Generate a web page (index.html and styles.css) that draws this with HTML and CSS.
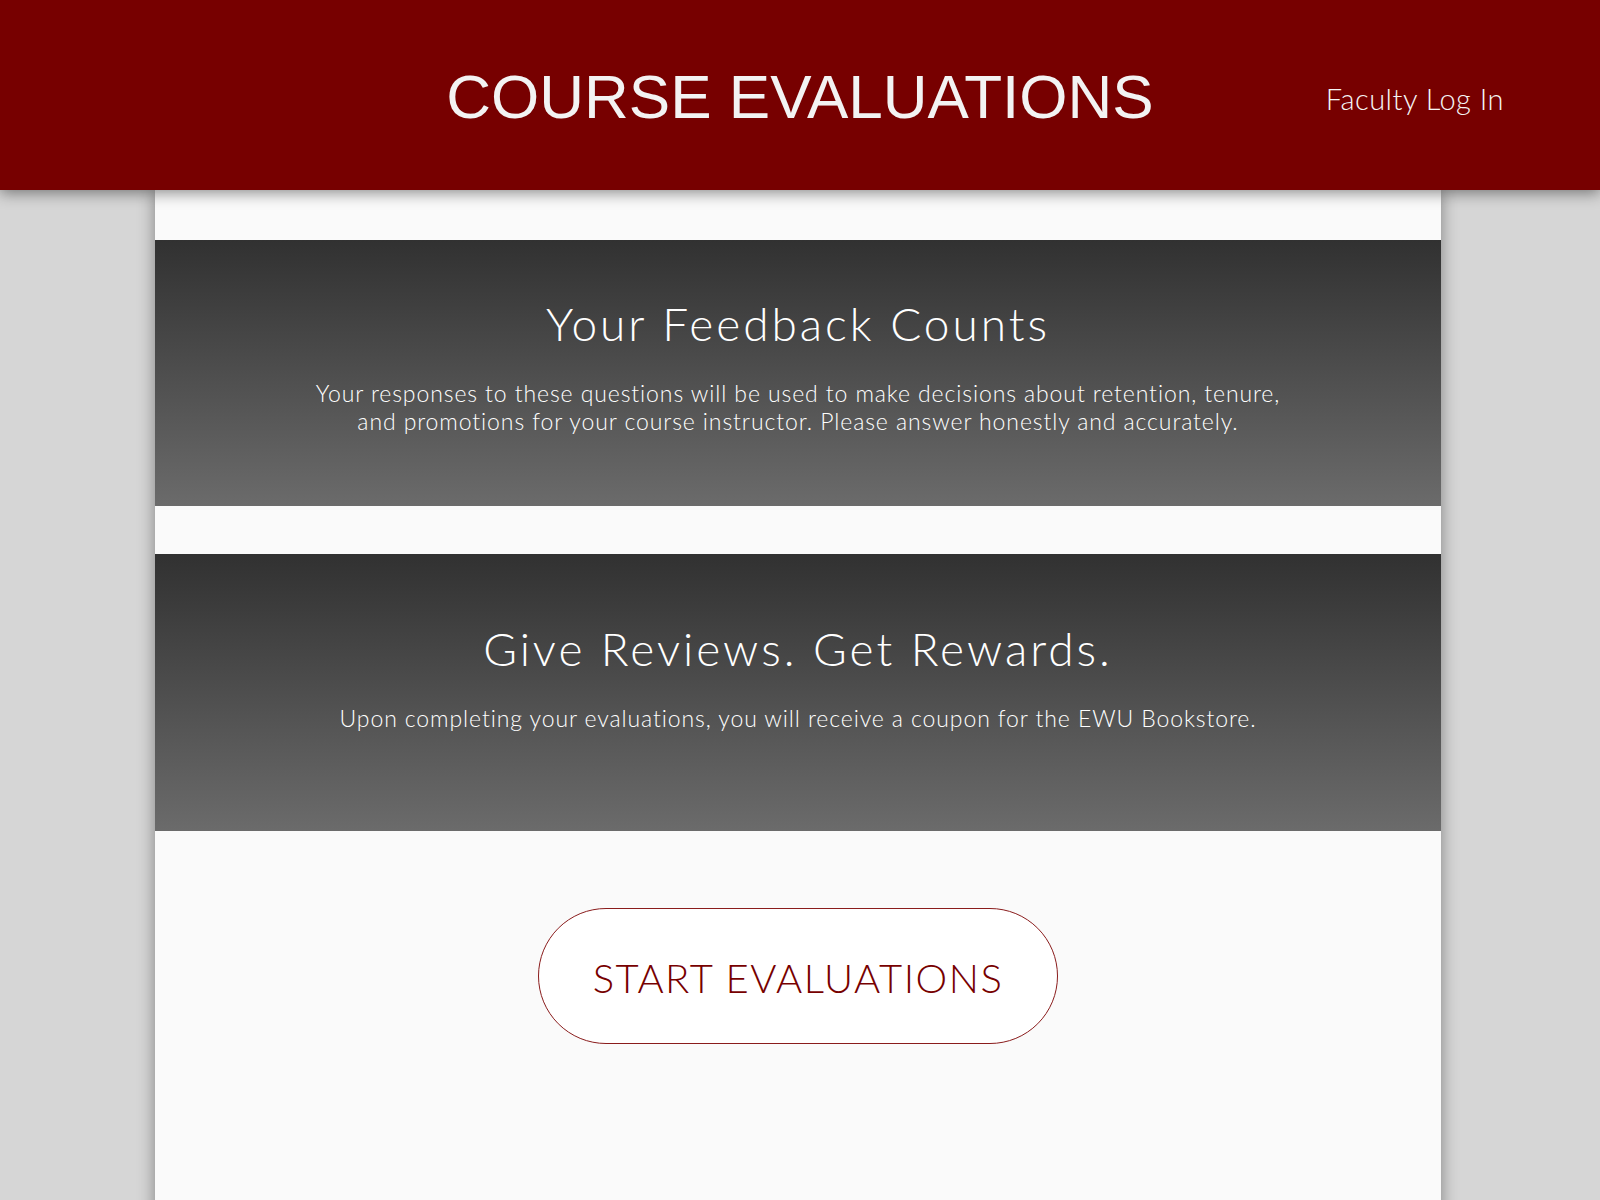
FILE: index.html
```html
<!DOCTYPE html>
<html lang="en">
<head>
<meta charset="utf-8">
<title>Course Evaluations</title>
<link rel="stylesheet" href="styles.css">
</head>
<body>
<header class="topbar">
  <div class="topbar-side"></div>
  <h1 class="topbar-title">COURSE EVALUATIONS</h1>
  <div class="topbar-side topbar-right">
    <a class="login-link" href="#">Faculty Log In</a>
  </div>
</header>
<main class="page">
  <section class="band band-feedback">
    <h2 class="band-title">Your Feedback Counts</h2>
    <p class="band-text">Your responses to these questions will be used to make decisions about retention, tenure,<br>and promotions for your course instructor. Please answer honestly and accurately.</p>
  </section>
  <section class="band band-rewards">
    <h2 class="band-title">Give Reviews. Get Rewards.</h2>
    <p class="band-text">Upon completing your evaluations, you will receive a coupon for the EWU Bookstore.</p>
  </section>
  <div class="action">
    <a class="start-btn" href="#">START EVALUATIONS</a>
  </div>
</main>
</body>
</html>
```
FILE: styles.css
```css
html, body {
  margin: 0;
  padding: 0;
}
body {
  background: #d6d6d6;
  font-family: Lato, "Open Sans", sans-serif;
  overflow: hidden;
  height: 1200px;
}
.topbar {
  position: relative;
  z-index: 2;
  height: 190px;
  background: #770000;
  display: grid;
  grid-template-columns: 1fr auto 1fr;
  align-items: center;
  box-shadow: 0 3px 14px rgba(0, 0, 0, 0.45);
}
.topbar-title {
  margin: 0;
  font-family: "Liberation Sans", Arial, sans-serif;
  font-weight: 400;
  font-size: 62px;
  line-height: 1;
  color: #f3f3f3;
  letter-spacing: 0;
  padding-top: 4px;
}
.topbar-right {
  display: flex;
  justify-content: flex-end;
  padding-right: 96px;
  padding-top: 6px;
}
.login-link {
  color: #f5f5f5;
  text-decoration: none;
  font-family: Lato, sans-serif;
  font-weight: 300;
  font-size: 29px;
  letter-spacing: 0.5px;
}
.page {
  position: relative;
  z-index: 1;
  width: 1286px;
  margin-left: 155px;
  background: #fafafa;
  min-height: 1010px;
  padding-top: 50px;
  box-shadow: 0 0 16px rgba(0, 0, 0, 0.4);
  display: flex;
  flex-direction: column;
  gap: 48px;
}
.band {
  box-sizing: border-box;
  background: linear-gradient(to bottom, #313131 0%, #6b6b6b 100%);
  color: #ffffff;
  text-align: center;
}
.band-feedback {
  height: 266px;
  padding-top: 54px;
}
.band-rewards {
  height: 277px;
  padding-top: 65px;
}
.band-title {
  margin: 0;
  font-weight: 300;
  font-size: 46px;
  line-height: 60px;
  letter-spacing: 3px;
}
.band-text {
  margin: 25px 0 0;
  font-weight: 300;
  font-size: 23px;
  line-height: 28px;
  letter-spacing: 0.9px;
}
.action {
  display: flex;
  justify-content: center;
  padding-top: 29px;
}
.start-btn {
  box-sizing: border-box;
  width: 520px;
  height: 136px;
  border: 1px solid #8a1c1c;
  border-radius: 68px;
  background: #ffffff;
  color: #770000;
  text-decoration: none;
  display: flex;
  align-items: center;
  justify-content: center;
  padding-top: 4px;
  font-family: Lato, sans-serif;
  font-weight: 300;
  font-size: 40px;
  letter-spacing: 1.5px;
}
```
